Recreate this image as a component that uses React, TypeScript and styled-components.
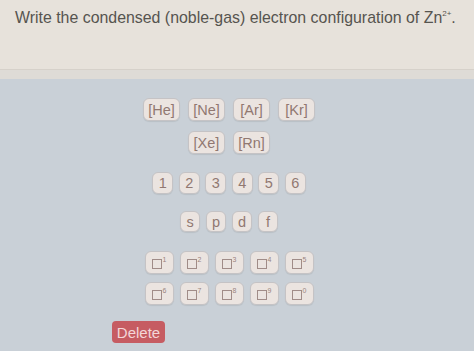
import styled, { createGlobalStyle } from 'styled-components';

const GlobalStyle = createGlobalStyle`
  html, body {
    margin: 0;
    padding: 0;
    background: #c9d0d7;
    font-family: 'Liberation Sans', Arial, sans-serif;
  }
`;

const Page = styled.div`
  width: 474px;
  height: 351px;
  overflow: hidden;
  display: flex;
  flex-direction: column;
  background: #c9d0d7;
`;

const Question = styled.div`
  height: 70px;
  background: #e7e2db;
  border-bottom: 1px solid #d6d1ca;
  padding: 9px 0 0 15px;
  box-sizing: border-box;
  font-size: 15.9px;
  color: #56544f;
  white-space: nowrap;

  sup {
    font-size: 8px;
    vertical-align: 7px;
  }
`;

const Band = styled.div`
  height: 9px;
  background: #dedbd6;
`;

const Panel = styled.div`
  flex: 1;
  display: flex;
  flex-direction: column;
  align-items: center;
  padding: 19px 16px 0 0;
`;

const Row = styled.div<{ gap: number; mt: number }>`
  display: flex;
  gap: ${({ gap }) => gap}px;
  margin-top: ${({ mt }) => mt}px;
`;

const Key = styled.button<{ w: number; h: number }>`
  width: ${({ w }) => w}px;
  height: ${({ h }) => h}px;
  padding: 0;
  display: flex;
  align-items: center;
  justify-content: center;
  background: #ebe4e0;
  border: 1px solid #c5c3c5;
  border-radius: 6px;
  box-shadow: 0 1px 1px rgba(0, 0, 0, 0.08);
  font-family: 'Liberation Sans', Arial, sans-serif;
  font-size: 14.5px;
  color: #917871;
`;

const Box = styled.span`
  display: inline-block;
  width: 8px;
  height: 8px;
  border: 1px solid #a08c88;
  margin-top: 3px;
`;

const Sup = styled.span`
  font-size: 7px;
  margin-left: 1px;
  margin-top: -6px;
  color: #9a8581;
`;

const DeleteRow = styled.div`
  align-self: stretch;
  margin-top: 16px;
  padding-left: 112px;
`;

const DeleteButton = styled.button`
  width: 53px;
  height: 22px;
  padding: 0;
  background: #c65c62;
  border: none;
  border-radius: 4px;
  color: #f3d6d8;
  font-family: 'Liberation Sans', Arial, sans-serif;
  font-size: 15px;
`;

const gases1 = ['[He]', '[Ne]', '[Ar]', '[Kr]'];
const gases2 = ['[Xe]', '[Rn]'];
const shells = ['1', '2', '3', '4', '5', '6'];
const orbitals = ['s', 'p', 'd', 'f'];

export default function App() {
  return (
    <Page>
      <GlobalStyle />
      <Question>
        Write the condensed (noble-gas) electron configuration of Zn<sup>2+</sup>.
      </Question>
      <Band />
      <Panel>
        <Row gap={8} mt={0}>
          {gases1.map((g) => (
            <Key key={g} w={37} h={23}>{g}</Key>
          ))}
        </Row>
        <Row gap={8} mt={10}>
          {gases2.map((g) => (
            <Key key={g} w={37} h={23}>{g}</Key>
          ))}
        </Row>
        <Row gap={5.5} mt={18}>
          {shells.map((s) => (
            <Key key={s} w={21} h={22}>{s}</Key>
          ))}
        </Row>
        <Row gap={6} mt={17}>
          {orbitals.map((o) => (
            <Key key={o} w={20} h={21}>{o}</Key>
          ))}
        </Row>
        <Row gap={6} mt={19}>
          {[1, 2, 3, 4, 5].map((n) => (
            <Key key={n} w={29} h={23}>
              <Box />
              <Sup>{n}</Sup>
            </Key>
          ))}
        </Row>
        <Row gap={6} mt={8}>
          {[6, 7, 8, 9, 10].map((n) => (
            <Key key={n} w={29} h={23}>
              <Box />
              <Sup>{n === 10 ? '0' : n}</Sup>
            </Key>
          ))}
        </Row>
        <DeleteRow>
          <DeleteButton>Delete</DeleteButton>
        </DeleteRow>
      </Panel>
    </Page>
  );
}
